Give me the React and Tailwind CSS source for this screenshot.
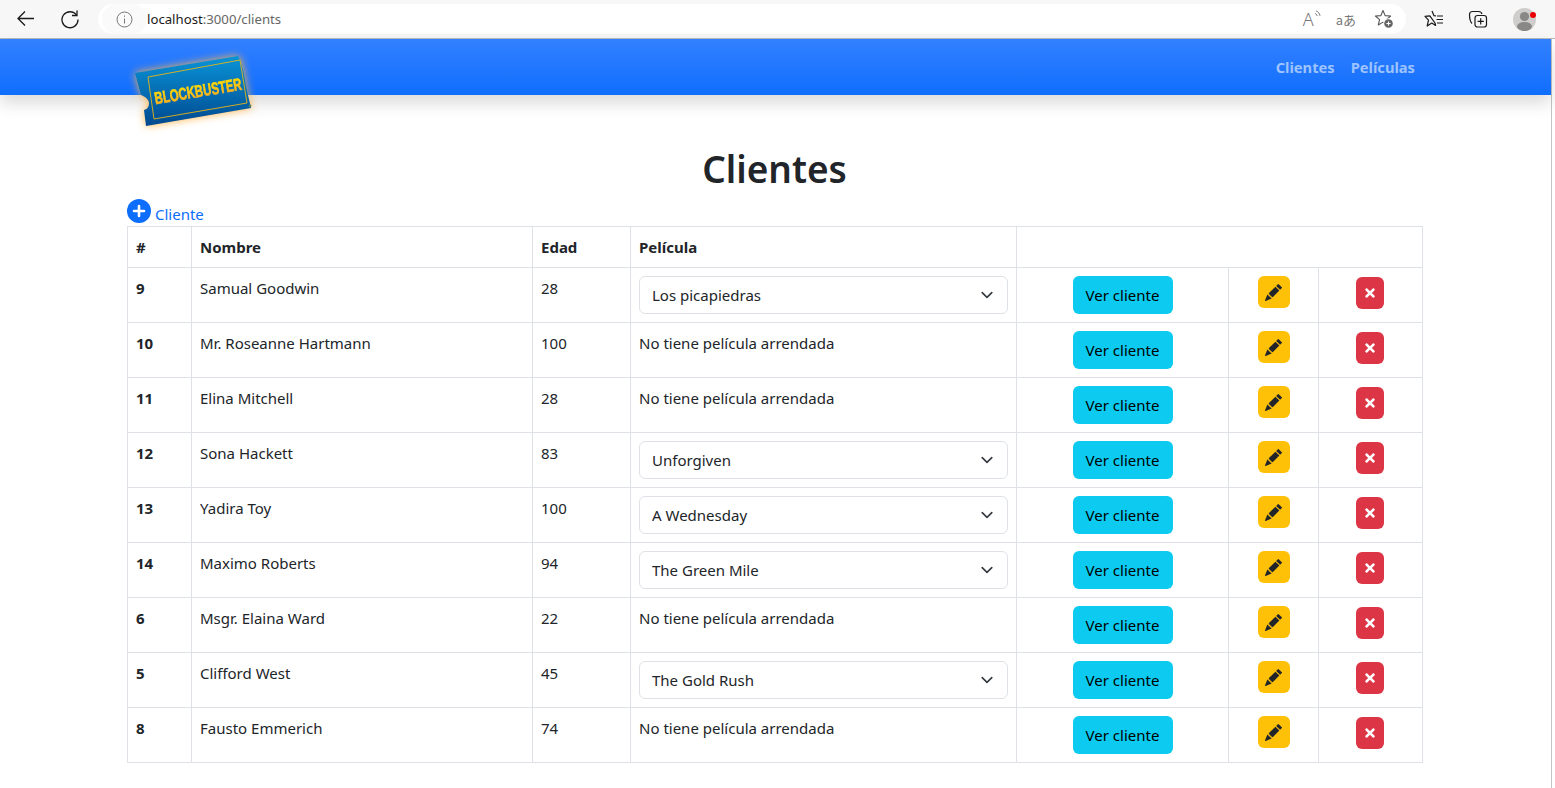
import React from "react";
import { BsPencilFill } from "react-icons/bs";
import { FaTimes } from "react-icons/fa";

const rows = [
  { id: 9, name: "Samual Goodwin", age: 28, film: "Los picapiedras" },
  { id: 10, name: "Mr. Roseanne Hartmann", age: 100 },
  { id: 11, name: "Elina Mitchell", age: 28 },
  { id: 12, name: "Sona Hackett", age: 83, film: "Unforgiven" },
  { id: 13, name: "Yadira Toy", age: 100, film: "A Wednesday" },
  { id: 14, name: "Maximo Roberts", age: 94, film: "The Green Mile" },
  { id: 6, name: "Msgr. Elaina Ward", age: 22 },
  { id: 5, name: "Clifford West", age: 45, film: "The Gold Rush" },
  { id: 8, name: "Fausto Emmerich", age: 74 },
];

function BrowserBar() {
  return (
    <div className="h-[39px] bg-[#f7f7f7] border-b border-[#b9b9b9] flex items-center">
      <div className="w-[98px] flex shrink-0 items-center">
        <svg width="20" height="20" viewBox="0 0 20 20" fill="none" stroke="#1a1a1a" strokeWidth="1.3" className="ml-[16px]">
          <path d="M18 9.5H2M9 2.5l-7 7 7 7" />
        </svg>
        <svg width="20" height="20" viewBox="0 0 20 20" fill="none" stroke="#1a1a1a" strokeWidth="1.3" className="ml-[24px]">
          <path d="M16.6 6.2A8 8 0 1 0 18 10.5" />
          <path d="M17 1.5v5h-5" />
        </svg>
      </div>
      <div className="w-[1308px] h-[30px] bg-white rounded-full flex items-center shrink-0">
        <div className="w-[45px] h-[30px] rounded-full bg-[#fafafa] flex items-center justify-center ml-[4px]">
          <svg width="17" height="17" viewBox="0 0 17 17" fill="none" stroke="#777">
            <circle cx="8.5" cy="8.5" r="7.5" />
            <path d="M8.5 7.5v5M8.5 4.5v1.3" />
          </svg>
        </div>
        <div className="text-[13.2px] leading-none text-[#666] pt-[1px]">
          <span className="text-[#1a1a1a]">localhost</span>:3000/clients
        </div>
        <div className="ml-auto flex items-center text-[#777]">
          <div className="relative w-[18px] h-[18px] mr-[15px]">
            <span className="text-[18px] font-light leading-[18px] block">A</span>
            <svg width="8" height="10" viewBox="0 0 8 10" fill="none" stroke="#777" strokeWidth="1" className="absolute left-[11px] top-0">
              <path d="M1 3.5c1 .3 1.8 1 2.2 2.5M2 .8c2 .7 3.6 2.5 4 5" />
            </svg>
          </div>
          <span className="text-[13px] leading-none font-['Noto_Sans_CJK_JP',sans-serif] mr-[18px]">aあ</span>
          <svg width="20" height="20" viewBox="0 0 20 20" fill="none" stroke="#555" strokeWidth="1.1" strokeLinejoin="round" className="mr-[12px]">
            <path d="M9 1.5L11.12 6.59L16.61 7.03L12.42 10.61L13.7 15.97L9 13.1L4.3 15.97L5.58 10.61L1.39 7.03L6.88 6.59Z" />
            <circle cx="14.5" cy="14.5" r="5.3" fill="#fff" stroke="none" />
            <circle cx="14.5" cy="14.5" r="4.3" fill="#666" stroke="none" />
            <path d="M14.5 12.4v4.2M12.4 14.5h4.2" stroke="#fff" />
          </svg>
        </div>
      </div>
      <svg width="20" height="20" viewBox="0 0 20 20" fill="none" stroke="#1a1a1a" strokeWidth="1.2" strokeLinejoin="round" className="ml-[18px] shrink-0">
        <path d="M8 2L10 6.7L12 6.9M11 14L11.6 16.4L7.8 14L3.2 17L4.5 11.2L1 7.4L5.8 6.8Z" />
        <path d="M13 7h6M12.5 10.5h6.5M13 14h6" />
      </svg>
      <svg width="20" height="20" viewBox="0 0 20 20" fill="none" stroke="#1a1a1a" strokeWidth="1.2" className="ml-[24px] shrink-0">
        <path d="M4 14.5C2.5 13 1.5 8.5 1.5 5.5c0-2 1.5-3 3-3h6c1.5 0 3 .7 3.5 2.5" />
        <rect x="7" y="6.5" width="11.5" height="11.5" rx="2.5" />
        <path d="M12.7 9.2v6.2M9.6 12.3h6.2" />
      </svg>
      <div className="relative w-[23px] h-[23px] rounded-full bg-[#cfcdcb] ml-[25px] shrink-0 overflow-visible">
        <svg width="23" height="23" viewBox="0 0 23 23" className="rounded-full">
          <circle cx="11.5" cy="8.5" r="4.6" fill="#8a8886" />
          <ellipse cx="11.5" cy="18.5" rx="7.5" ry="4.6" fill="#8a8886" />
        </svg>
        <div className="absolute w-[6px] h-[6px] rounded-full bg-[#ea0000] left-[17px] top-[4px]" />
      </div>
    </div>
  );
}

function Logo() {
  return (
    <svg width="140" height="90" viewBox="0 0 140 90" className="absolute left-[125px] top-[6px] overflow-visible drop-shadow-[0_0_4px_#ffb347]">
      <defs>
        <linearGradient id="ticket" x1="0" y1="0" x2="0" y2="1">
          <stop offset="0" stopColor="#0a94d8" />
          <stop offset="1" stopColor="#00498f" />
        </linearGradient>
        <linearGradient id="letters" x1="0" y1="0" x2="0" y2="1">
          <stop offset="0" stopColor="#ffe100" />
          <stop offset="1" stopColor="#f9a825" />
        </linearGradient>
      </defs>
      <path d="M10 28L113 11l2 4 1 3 2 7 1 5 1 5 1 6 1 5 4 17L21 81l-2-16c4-1 5-4 5-7s-3-6-8-8z" fill="url(#ticket)" />
      <path d="M23 32L115 15l7 43-93 16z" fill="none" stroke="#e7b416" strokeWidth="0.9" />
      <text
        x="73"
        y="52"
        textAnchor="middle"
        transform="rotate(-9.5 73 46)"
        textLength="88"
        lengthAdjust="spacingAndGlyphs"
        fontFamily="'Liberation Sans Narrow','Liberation Sans',sans-serif"
        fontWeight="700"
        fontSize="17"
        fill="url(#letters)"
        stroke="url(#letters)"
        strokeWidth="0.6"
      >
        BLOCKBUSTER
      </text>
      <circle cx="125" cy="61" r="1.4" fill="#5a7f5a" />
    </svg>
  );
}

function Nav() {
  return (
    <div className="relative h-[56px] bg-gradient-to-b from-[#3180ff] to-[#0d6efd] shadow-[0_8px_16px_rgba(0,0,0,0.15)]">
      <Logo />
      <div className="w-[1296px] ml-[127px] h-full flex justify-end items-center text-[14.7px]">
        <a className="px-2 font-bold text-[#9dc3ff]">Clientes</a>
        <a className="px-2 font-bold text-[#9dc3ff]">Películas</a>
      </div>
    </div>
  );
}

function Row({ r }) {
  return (
    <tr className="border-b border-[#dee2e6]">
      <td className="p-2 align-top border-x border-[#dee2e6] font-bold">{r.id}</td>
      <td className="p-2 align-top border-r border-[#dee2e6]">{r.name}</td>
      <td className="p-2 align-top border-r border-[#dee2e6]">{r.age}</td>
      <td className="p-2 align-top border-r border-[#dee2e6]">
        {r.film ? (
          <div className="relative">
            <select defaultValue={r.film} className="w-full h-[38px] pl-[12px] pr-9 appearance-none bg-white border border-[#dee2e6] rounded-md text-[#212529]">
              <option>{r.film}</option>
            </select>
            <svg width="16" height="16" viewBox="0 0 16 16" fill="none" stroke="#343a40" strokeWidth="2" strokeLinecap="round" strokeLinejoin="round" className="absolute right-[13px] top-[11px] scale-[0.8]">
              <path d="M2 5l6 6 6-6" />
            </svg>
          </div>
        ) : (
          "No tiene película arrendada"
        )}
      </td>
      <td className="p-2 align-top border-r border-[#dee2e6] text-center">
        <button className="w-[100px] h-[38px] bg-[#0dcaf0] rounded-md text-black">Ver cliente</button>
      </td>
      <td className="p-2 align-top border-r border-[#dee2e6] text-center">
        <button className="w-[32px] h-[32px] bg-[#ffc107] rounded-md inline-flex items-center justify-center text-[#212529]">
          <BsPencilFill size={17} />
        </button>
      </td>
      <td className="pl-[7px] pr-[8px] pt-[9px] align-top border-r border-[#dee2e6] text-center">
        <button className="w-[28px] h-[32px] bg-[#dc3545] rounded-md inline-flex items-center justify-center text-white">
          <FaTimes size={14} />
        </button>
      </td>
    </tr>
  );
}

export default function App() {
  return (
    <div className="h-[788px] w-[1555px] overflow-hidden bg-white text-[#212529] text-[15px] leading-6 font-['Noto_Sans',sans-serif]">
      <BrowserBar />
      <div className="w-[1552px] h-[749px] border-r border-[#c4c4c4]">
        <Nav />
        <div className="w-[1296px] ml-[127px]">
          <h1 className="text-[37px] leading-[48px] font-semibold text-center pt-[50px] -ml-[1px]">Clientes</h1>
          <div className="h-[27px] flex items-start mt-[6px]">
            <svg width="24" height="24" viewBox="0 0 24 24" className="shrink-0">
              <circle cx="12" cy="12" r="12" fill="#0d6efd" />
              <path d="M12 7v10M7 12h10" stroke="#fff" strokeWidth="2.6" strokeLinecap="round" />
            </svg>
            <span className="ml-[4px] text-[#0d6efd] mt-[3px]">Cliente</span>
          </div>
          <table className="w-[1295px] table-fixed border-collapse">
            <colgroup>
              <col className="w-[64px]" />
              <col className="w-[341px]" />
              <col className="w-[98px]" />
              <col className="w-[386px]" />
              <col className="w-[212px]" />
              <col className="w-[90px]" />
              <col className="w-[104px]" />
            </colgroup>
            <thead>
              <tr className="border-y border-[#dee2e6] text-left">
                <th className="p-2 border-x border-[#dee2e6]">#</th>
                <th className="p-2 border-r border-[#dee2e6]">Nombre</th>
                <th className="p-2 border-r border-[#dee2e6]">Edad</th>
                <th className="p-2 border-r border-[#dee2e6]">Película</th>
                <th colSpan={3} className="p-2 border-r border-[#dee2e6]"></th>
              </tr>
            </thead>
            <tbody>
              {rows.map((r) => (
                <Row key={r.id} r={r} />
              ))}
            </tbody>
          </table>
        </div>
      </div>
    </div>
  );
}
